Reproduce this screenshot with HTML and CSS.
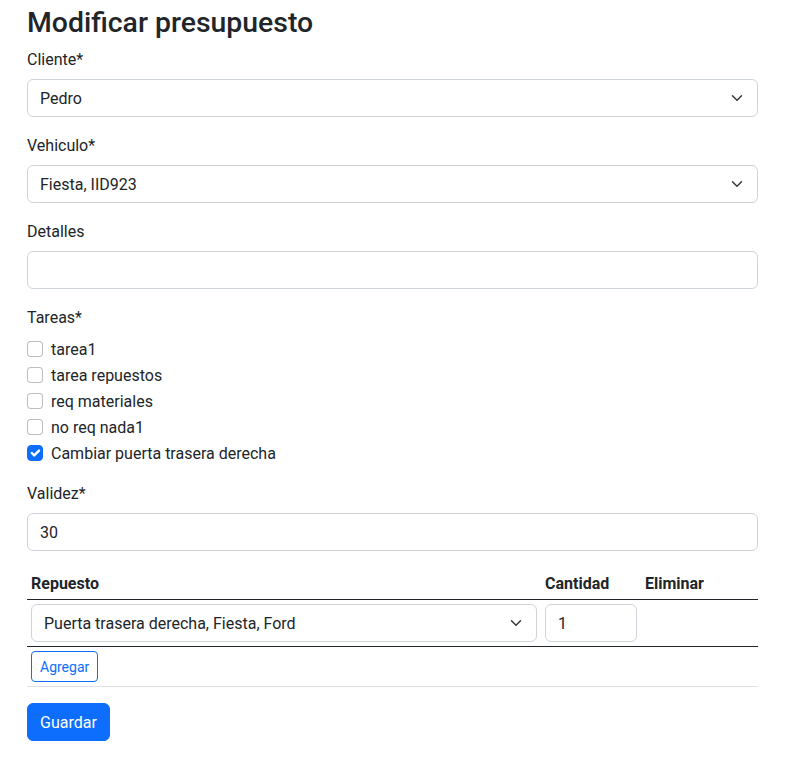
FILE: index.html
```html
<!DOCTYPE html>
<html lang="es">
<head>
<meta charset="utf-8">
<title>Modificar presupuesto</title>
<link rel="stylesheet" href="styles.css">
</head>
<body>
<main class="page">
  <h2 class="title">Modificar presupuesto</h2>

  <div class="field">
    <label class="form-label">Cliente*</label>
    <div class="control select">
      <span>Pedro</span>
      <svg class="chev" viewBox="0 0 16 16" width="16" height="12"><path d="M2 5l6 6 6-6" fill="none" stroke="#343a40" stroke-width="2" stroke-linecap="round" stroke-linejoin="round"/></svg>
    </div>
  </div>

  <div class="field">
    <label class="form-label">Vehiculo*</label>
    <div class="control select">
      <span>Fiesta, IID923</span>
      <svg class="chev" viewBox="0 0 16 16" width="16" height="12"><path d="M2 5l6 6 6-6" fill="none" stroke="#343a40" stroke-width="2" stroke-linecap="round" stroke-linejoin="round"/></svg>
    </div>
  </div>

  <div class="field">
    <label class="form-label">Detalles</label>
    <div class="control"></div>
  </div>

  <div class="field">
    <label class="form-label">Tareas*</label>
    <div class="checks">
      <div class="check"><span class="box"></span><span class="txt">tarea1</span></div>
      <div class="check"><span class="box"></span><span class="txt">tarea repuestos</span></div>
      <div class="check"><span class="box"></span><span class="txt">req materiales</span></div>
      <div class="check"><span class="box"></span><span class="txt">no req nada1</span></div>
      <div class="check"><span class="box checked"><svg viewBox="0 0 20 20" width="16" height="16"><path d="M6 10l3 3l6-6" fill="none" stroke="#fff" stroke-width="3" stroke-linecap="round" stroke-linejoin="round"/></svg></span><span class="txt">Cambiar puerta trasera derecha</span></div>
    </div>
  </div>

  <div class="field">
    <label class="form-label">Validez*</label>
    <div class="control"><span>30</span></div>
  </div>

  <table class="table">
    <colgroup>
      <col>
      <col class="col-qty">
      <col class="col-del">
    </colgroup>
    <thead>
      <tr><th>Repuesto</th><th>Cantidad</th><th>Eliminar</th></tr>
    </thead>
    <tbody>
      <tr>
        <td>
          <div class="control select">
            <span>Puerta trasera derecha, Fiesta, Ford</span>
            <svg class="chev" viewBox="0 0 16 16" width="16" height="12"><path d="M2 5l6 6 6-6" fill="none" stroke="#343a40" stroke-width="2" stroke-linecap="round" stroke-linejoin="round"/></svg>
          </div>
        </td>
        <td><div class="control"><span>1</span></div></td>
        <td></td>
      </tr>
    </tbody>
    <tfoot>
      <tr><td colspan="3"><button class="btn-outline">Agregar</button></td></tr>
    </tfoot>
  </table>

  <button class="btn-primary">Guardar</button>
</main>
</body>
</html>
```

FILE: styles.css
```css
html, body {
  margin: 0;
  padding: 0;
  background: #fff;
}

body {
  font-family: Roboto, "Noto Sans", "Liberation Sans", sans-serif;
  font-size: 16px;
  line-height: 24px;
  color: #212529;
}

.page {
  width: 731px;
  padding: 6px 44px 16px 27px;
}

.title {
  margin: 0 0 7px 0;
  font-size: 28.4px;
  line-height: 1.2;
  font-weight: 500;
}

.field {
  margin-bottom: 16px;
}

.form-label {
  display: block;
  margin-bottom: 6px;
  line-height: 26px;
}

.control {
  box-sizing: border-box;
  height: 38px;
  border: 1px solid #ced4da;
  border-radius: 6px;
  padding: 7px 12px 5px;
  line-height: 24px;
  display: flex;
  align-items: center;
  background: #fff;
}

.select {
  justify-content: space-between;
  padding-right: 12px;
}

.chev {
  flex: none;
  display: block;
  margin-top: -2px;
}

.checks {
  display: flex;
  flex-direction: column;
  gap: 2px;
}

.check {
  display: flex;
  align-items: flex-start;
  min-height: 24px;
  height: 24px;
}

.check .txt {
  line-height: 26px;
}

.box {
  box-sizing: border-box;
  flex: none;
  width: 16px;
  height: 16px;
  margin-top: 4px;
  margin-right: 8px;
  border: 1px solid rgba(0, 0, 0, 0.25);
  border-radius: 4px;
  background: #fff;
  display: flex;
  align-items: center;
  justify-content: center;
}

.box.checked {
  background: #0d6efd;
  border-color: #0d6efd;
}

.box.checked svg {
  display: block;
  flex: none;
}

.table {
  width: 100%;
  border-collapse: collapse;
  table-layout: fixed;
  margin-bottom: 16px;
}

.col-qty {
  width: 100px;
}

.col-del {
  width: 117px;
}

.table th,
.table td {
  padding: 4px;
  text-align: left;
  vertical-align: top;
}

.table th {
  font-weight: 700;
  vertical-align: bottom;
  padding-top: 5px;
  padding-bottom: 3px;
}

.table thead tr,
.table tbody tr {
  border-bottom: 1px solid #212529;
}

.table tfoot tr {
  border-bottom: 1px solid #dee2e6;
}

.btn-outline {
  box-sizing: border-box;
  font-family: inherit;
  font-size: 14px;
  line-height: 21px;
  height: 31px;
  padding: 5px 8px 3px;
  color: #0d6efd;
  background: #fff;
  border: 1px solid #0d6efd;
  border-radius: 4px;
  display: block;
}

.btn-primary {
  box-sizing: border-box;
  font-family: inherit;
  font-size: 16px;
  line-height: 24px;
  height: 38px;
  padding: 7px 12px 5px;
  color: #fff;
  background: #0d6efd;
  border: 1px solid #0d6efd;
  border-radius: 6px;
  display: block;
}
```
